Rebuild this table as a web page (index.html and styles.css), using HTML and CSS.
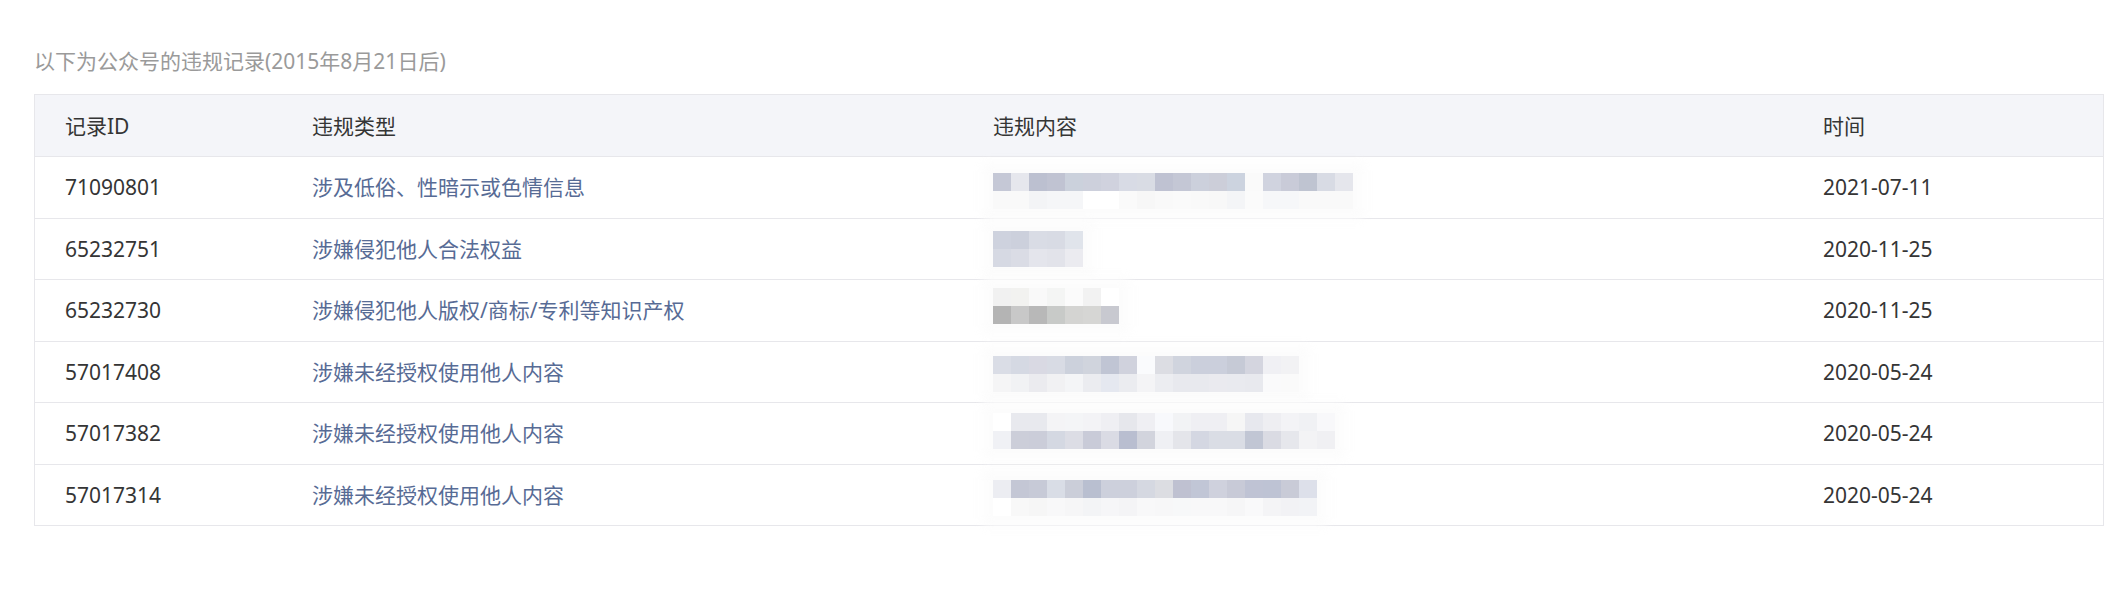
FILE: index.html
```html
<!DOCTYPE html>
<html>
<head>
  <title>违规记录</title>
  <meta charset="utf-8">
  <meta name="viewport" content="width=device-width, initial-scale=1.0">
  <link rel="stylesheet" href="styles.css">
</head>
<body>

  <div class="page">
    <p class="tips">以下为公众号的违规记录(2015年8月21日后)</p>

    <table class="records">
      <thead>
        <tr>
          <th class="col-id">记录ID</th>
          <th class="col-type">违规类型</th>
          <th class="col-content">违规内容</th>
          <th class="col-time">时间</th>
        </tr>
      </thead>
      <tbody id="recordList"></tbody>
    </table>
  </div>

  <script>
    // content is mosaic-blurred in the original, so each row carries its block colours
    const records = [
      {
        id: '71090801', type: '涉及低俗、性暗示或色情信息', time: '2021-07-11', shift: 8,
        top: ['c5c8d6','e6e7ed','bcc0d0','c0c3d2','cbd1dc','cdd0dc','d0d2de','d8dbe5','d9dce4','bfc2d2','c4c7d5','ccd0dc','ccced9','ccd3df','fafafa','d0d3df','c9cbd8','bfc4d1','d8dbe4','e5e6ec'],
        bottom: ['f9f9f9','f9f9f9','f3f4f6','f5f6f8','f5f6f8','fff','fff','fafafa','f7f7f7','f9f9f9','fafafa','f9f9f9','f8f8f8','f4f5f7','fbfbfb','f6f7f9','f6f7f9','f9f9f9','f9f9f9','f9f9f9']
      },
      {
        id: '65232751', type: '涉嫌侵犯他人合法权益', time: '2020-11-25', shift: 0,
        top: ['ced2de','ccd0dc','d9dce5','d8dbe4','e0e4eb'],
        bottom: ['d6d9e3','dadce5','e4e5ec','e2e3ea','ebebf0']
      },
      {
        id: '65232730', type: '涉嫌侵犯他人版权/商标/专利等知识产权', time: '2020-11-25', shift: -8,
        top: ['f1f1f1','f2f2f0','f9f9f9','f4f5f4','fbfbfb','f2f2f2','fff'],
        bottom: ['b4b4b4','c8c8c8','b8b8b8','c8cac8','d4d4d2','d6d6d4','c8c9d0']
      },
      {
        id: '57017408', type: '涉嫌未经授权使用他人内容', time: '2020-05-24', shift: 4,
        top: ['dadde6','d5d9e3','d9d9e3','d8dbe4','ccd1dc','d0d4dd','c0c5d4','d0d2dd','fafbfd','dcdde3','d0d4de','cbcfdc','cbcfdc','c6cad6','d4d5df','f0f0f4','f2f2f4'],
        bottom: ['f5f5f6','f1f2f4','ebebef','f1f1f3','f4f5f7','ebecf0','e5e8f0','ebecf0','f4f4f6','ecedf1','e8e9ee','e8e9ee','eaeaef','e9eaef','e8e9ee','fafafb','fafafa']
      },
      {
        id: '57017382', type: '涉嫌未经授权使用他人内容', time: '2020-05-24', shift: -4,
        top: ['fff','e8e9ee','e8e9ee','f4f4f6','f4f5f7','f3f3f6','efeff3','e6e7ec','efeff3','f8f9fc','f2f3f5','efeff3','efeff3','f6f6f6','e7e8ee','eeeef2','f3f3f6','f0f1f4','f8f8fa'],
        bottom: ['f0f1f5','ccced9','cbcdd9','d4d8e2','dcdde5','c9cbd8','dadbe4','b9bed0','d2d4dd','eff0f4','e4e5ea','d4d7e2','dadde5','dadde5','c1c6d4','dadbe3','e6e7ec','f3f3f5','f0f0f3']
      },
      {
        id: '57017314', type: '涉嫌未经授权使用他人内容', time: '2020-05-24', shift: 6,
        top: ['ecedf2','c4c7d5','c7cad7','d9dde6','cbced9','b9bfd0','cdd0dc','cdd0dc','d5d8e1','dcdde2','bfc1d1','c1c6d6','cfd1dd','c8cad7','bfc3d4','bec3d4','c9cbd7','dde0ea'],
        bottom: ['fff','f8f8f8','f6f6f6','f8f8f9','f6f6f7','f3f4f6','f6f6f8','f4f4f6','f8f8f9','f7f7f8','f7f8f9','f8f8f9','f8f8f9','f6f6f7','f9f9fa','f4f4f6','f2f2f5','f2f3f6']
      }
    ];

    function blockRow(colors) {
      let html = '<div class="mosaic-row">';
      colors.forEach(c => {
        html += `<span class="block" style="background:#${c}"></span>`;
      });
      return html + '</div>';
    }

    function renderRecords() {
      const list = document.getElementById('recordList');
      list.innerHTML = '';

      records.forEach(r => {
        const tr = document.createElement('tr');
        tr.innerHTML = `
          <td class="col-id">${r.id}</td>
          <td class="col-type"><a href="javascript:;">${r.type}</a></td>
          <td class="col-content">
            <div class="mosaic" style="margin-top:${r.shift}px">
              ${blockRow(r.top)}
              ${blockRow(r.bottom)}
            </div>
          </td>
          <td class="col-time">${r.time}</td>
        `;
        list.appendChild(tr);
      });
    }

    renderRecords();
  </script>

</body>
</html>
```

FILE: styles.css
```css
body {
  margin: 0;
  background: #fff;
  font-family: "Noto Sans", "Noto Sans CJK SC", sans-serif;
  font-size: 21px;
  color: #353535;
}
.page {
  padding: 46px 24px 60px 34px;
}
.tips {
  margin: 0 0 18px;
  line-height: 30px;
  color: #9a9a9a;
}
.records {
  width: 100%;
  border-collapse: collapse;
  border: 1px solid #e7e7eb;
  table-layout: fixed;
}
.records th,
.records td {
  text-align: left;
  font-weight: normal;
  padding: 0 30px;
  line-height: 24px;
  vertical-align: middle;
  white-space: nowrap;
}
.records th {
  height: 61px;
  background: #f4f5f9;
  color: #353535;
}
.records td {
  height: 60.5px;
  border-top: 1px solid #e7e7eb;
}
.col-id { width: 187px; }
.col-type { width: 621px; }
.col-content { width: 770px; }
.records a {
  color: #576b95;
  text-decoration: none;
}
.mosaic {
  position: relative;
  display: inline-block;
  vertical-align: middle;
  box-shadow: 0 0 10px 10px rgba(252, 252, 252, 0.9);
  background: #fcfcfc;
}
.mosaic-row {
  display: flex;
}
.block {
  width: 18px;
  height: 18px;
}
```
